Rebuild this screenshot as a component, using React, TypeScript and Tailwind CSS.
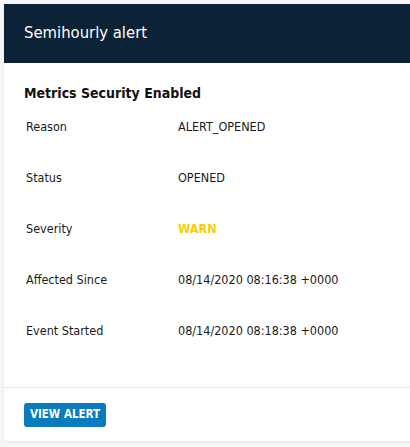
const rows: { label: string; value: string; warn?: boolean }[] = [
  { label: "Reason", value: "ALERT_OPENED" },
  { label: "Status", value: "OPENED" },
  { label: "Severity", value: "WARN", warn: true },
  { label: "Affected Since", value: "08/14/2020 08:16:38 +0000" },
  { label: "Event Started", value: "08/14/2020 08:18:38 +0000" },
];

const font = { fontFamily: '"DejaVu Sans Condensed", "Liberation Sans", sans-serif' };

const App = () => {
  return (
    <div className="w-[410px] h-[447px] overflow-hidden bg-[#f5f6f8] pt-1 pl-1" style={font}>
      <div className="w-[420px] bg-white rounded-sm shadow-[0_1px_3px_rgba(0,0,0,0.08)]">
        <div className="h-[59px] bg-[#0c2236] flex items-center pl-5">
          <h1 className="text-white text-[16.5px] leading-none">Semihourly alert</h1>
        </div>
        <div className="pt-[22px] pb-[30px]">
          <h2 className="pl-5 text-[14px] font-bold text-[#111] leading-[16px]">Metrics Security Enabled</h2>
          <div className="mt-[1px] pl-[22px]">
            {rows.map((r) => (
              <div key={r.label} className="h-[51px] flex items-center text-[12.5px] text-[#1a1a1a]">
                <span className="w-[152px]">{r.label}</span>
                <span className={r.warn ? "font-bold text-[#f7cd00]" : ""}>{r.value}</span>
              </div>
            ))}
          </div>
        </div>
        <div className="border-t border-[#e8e8e8] h-[54px] flex items-center pl-5">
          <button className="w-[82px] h-6 rounded-[3px] bg-[#0a7bbd] text-white text-[11.5px] font-bold">
            VIEW ALERT
          </button>
        </div>
      </div>
    </div>
  );
};

export default App;
